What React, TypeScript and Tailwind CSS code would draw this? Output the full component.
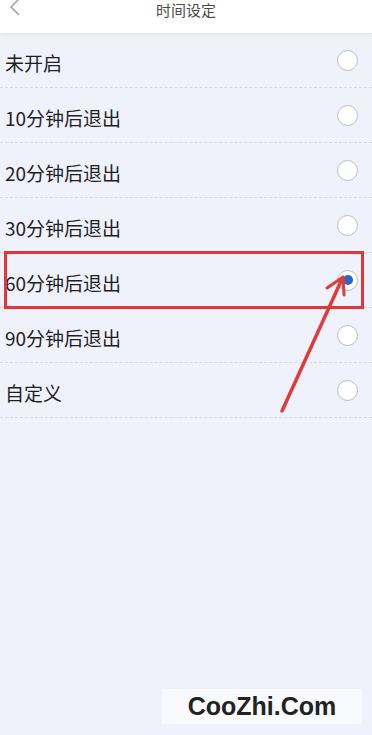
import React from "react";

const options = [
  "未开启",
  "10分钟后退出",
  "20分钟后退出",
  "30分钟后退出",
  "60分钟后退出",
  "90分钟后退出",
  "自定义",
];

const font = {
  fontFamily: '"Noto Sans CJK SC", "Noto Sans", sans-serif',
};

export default function App() {
  const selected = 4;

  return (
    <div
      className="relative h-[735px] w-[372px] overflow-hidden bg-[#eff2fb]"
      style={font}
    >
      <div className="relative z-10 flex h-[33px] items-start justify-center bg-white shadow-[0_1px_3px_rgba(0,0,0,0.08)]">
        <svg
          className="absolute left-[9px] top-[-2px]"
          width="12"
          height="18"
          viewBox="0 0 12 18"
        >
          <path d="M10 1 L2 9 L10 17" fill="none" stroke="#9a9a9a" strokeWidth="1.4" />
        </svg>
        <span className="pt-[2px] text-[15px] leading-[16px] text-[#4a4a4a]">时间设定</span>
      </div>

      <ul>
        {options.map((label, i) => (
          <li
            key={label}
            className="flex h-[55px] items-center justify-between border-b border-dashed border-[#d6d9e2] pl-[5px] pr-[14px]"
          >
            <span className="pt-[5px] text-[19px] leading-[24px] text-[#1f1f1f]">{label}</span>
            <span className="flex h-[21px] w-[21px] items-center justify-center rounded-full border-[1.5px] border-[#b9bcc2] bg-white">
              {i === selected && (
                <span className="h-[10px] w-[10px] rounded-full bg-[#2e67c2]" />
              )}
            </span>
          </li>
        ))}
      </ul>

      <div className="absolute left-[4px] top-[251px] h-[58px] w-[360px] border-[3px] border-[#e0373a]" />

      <svg
        className="absolute left-0 top-0"
        width="372"
        height="735"
        viewBox="0 0 372 735"
      >
        <line x1="282" y1="411" x2="342" y2="279" stroke="#e23a3a" strokeWidth="3.5" strokeLinecap="round" />
        <path d="M343 277 L327 288 M343 277 L344 295" stroke="#e23a3a" strokeWidth="3" strokeLinecap="round" fill="none" />
      </svg>

      <div className="absolute left-[162px] top-[689px] flex h-[35px] w-[200px] items-center justify-center bg-[#f9fafd]">
        <span
          className="text-[25px] font-bold leading-none text-[#222]"
          style={{ fontFamily: '"Liberation Sans", Arial, sans-serif' }}
        >
          CooZhi.Com
        </span>
      </div>
    </div>
  );
}
